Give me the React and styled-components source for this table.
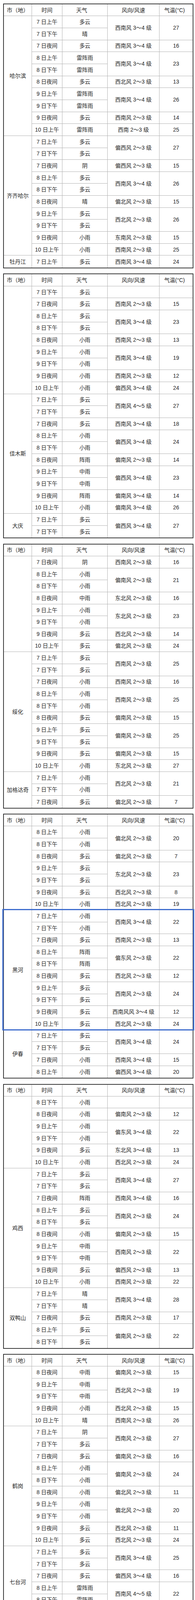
import React from 'react';
import styled, { createGlobalStyle } from 'styled-components';

const HEADER_H = 30.3;
const ROW_H = 30.67;

const GlobalStyle = createGlobalStyle`
  html, body { margin: 0; padding: 0; background: #fff; }
  body {
    font-family: "Liberation Sans", "Noto Sans CJK SC", sans-serif;
    color: #262626;
  }
`;

const Page = styled.div`
  width: 500px;
  box-sizing: border-box;
  padding: 9px 4px 4px 8px;
  display: flex;
  flex-direction: column;
  gap: 13.3px;
`;

const Frame = styled.div`
  position: relative;
  width: 488px;
  box-sizing: border-box;
  border: 2px solid #3a3a3a;
  background: #fff;
`;

const Sheet = styled.div`
  display: grid;
  grid-template-columns: 72px 78px 116px 133px 1fr;
  grid-template-rows: ${HEADER_H}px repeat(${(p) => p.$rows}, ${ROW_H}px);
  font-size: 14px;
  line-height: 1;
`;

const Cell = styled.div`
  grid-column: ${(p) => p.$col};
  grid-row: ${(p) => p.$row} / span ${(p) => p.$span || 1};
  box-sizing: border-box;
  display: flex;
  align-items: center;
  justify-content: center;
  white-space: nowrap;
  color: #262626;
  border-right: ${(p) => (p.$col === 5 ? 'none' : '1px solid #b2b2b2')};
  border-bottom: ${(p) => (p.$end ? 'none' : '1px solid #b2b2b2')};
`;

const HeadCell = styled(Cell)`
  padding-right: ${(p) => p.$shift || 0}px;
`;

const Highlight = styled.div`
  position: absolute;
  left: -4px;
  width: 492px;
  box-sizing: border-box;
  border: 3.5px solid #3c6bcd;
  pointer-events: none;
`;

const fix = (s) => (s ? s.replace('~', '～') : s);

const TABLES = [
  { groups: [
      { city: '哈尔滨', rows: [
          ['7 日上午', '多云', '西南风 3~4 级', '27', 2], ['7 日下午', '晴'],
          ['7 日夜间', '多云', '西南风 3~4 级', '16', 1],
          ['8 日上午', '雷阵雨', '西南风 3~4 级', '23', 2], ['8 日下午', '雷阵雨'],
          ['8 日夜间', '多云', '西北风 2~3 级', '13', 1],
          ['9 日上午', '雷阵雨', '西南风 3~4 级', '26', 2], ['9 日下午', '雷阵雨'],
          ['9 日夜间', '多云', '西南风 2~3 级', '14', 1],
          ['10 日上午', '雷阵雨', '西南 2~3 级', '25', 1] ] },
      { city: '齐齐哈尔', rows: [
          ['7 日上午', '多云', '偏西风 2~3 级', '27', 2], ['7 日下午', '多云'],
          ['7 日夜间', '阴', '偏西风 2~3 级', '15', 1],
          ['8 日上午', '多云', '西南风 3~4 级', '26', 2], ['8 日下午', '多云'],
          ['8 日夜间', '晴', '偏北风 2~3 级', '15', 1],
          ['9 日上午', '多云', '西北风 2~3 级', '26', 2], ['9 日下午', '多云'],
          ['9 日夜间', '小雨', '东南风 2~3 级', '15', 1],
          ['10 日上午', '小雨', '西南风 2~3 级', '25', 1] ] },
      { city: '牡丹江', rows: [['7 日上午', '多云', '西南风 3~4 级', '24', 1]] } ] },
  { groups: [
      { city: '', rows: [
          ['7 日下午', '多云', '', '', 1],
          ['7 日夜间', '多云', '西南风 2~3 级', '15', 1],
          ['8 日上午', '多云', '西南风 3~4 级', '23', 2], ['8 日下午', '多云'],
          ['8 日夜间', '小雨', '西南风 2~3 级', '13', 1],
          ['9 日上午', '小雨', '西南风 3~4 级', '19', 2], ['9 日下午', '小雨'],
          ['9 日夜间', '小雨', '西南风 2~3 级', '12', 1],
          ['10 日上午', '小雨', '偏西风 3~4 级', '24', 1] ] },
      { city: '佳木斯', rows: [
          ['7 日上午', '多云', '西南风 4~5 级', '27', 2], ['7 日下午', '多云'],
          ['7 日夜间', '多云', '西南风 3~4 级', '18', 1],
          ['8 日上午', '小雨', '偏西风 3~4 级', '24', 2], ['8 日下午', '小雨'],
          ['8 日夜间', '阵雨', '偏南风 2~3 级', '14', 1],
          ['9 日上午', '中雨', '偏西风 3~4 级', '23', 2], ['9 日下午', '中雨'],
          ['9 日夜间', '阵雨', '偏南风 3~4 级', '14', 1],
          ['10 日上午', '小雨', '偏南风 3~4 级', '26', 1] ] },
      { city: '大庆', rows: [
          ['7 日上午', '多云', '偏西风 3~4 级', '27', 2], ['7 日下午', '多云'] ] } ] },
  { groups: [
      { city: '', rows: [
          ['7 日夜间', '阴', '西南风 2~3 级', '16', 1],
          ['8 日上午', '小雨', '偏南风 2~3 级', '21', 2], ['8 日下午', '小雨'],
          ['8 日夜间', '中雨', '东北风 2~3 级', '16', 1],
          ['9 日上午', '小雨', '东北风 2~3 级', '23', 2], ['9 日下午', '小雨'],
          ['9 日夜间', '多云', '西北风 2~3 级', '14', 1],
          ['10 日上午', '多云', '偏北风 2~3 级', '24', 1] ] },
      { city: '绥化', rows: [
          ['7 日上午', '多云', '西南风 2~3 级', '25', 2], ['7 日下午', '多云'],
          ['7 日夜间', '小雨', '西南风 2~3 级', '16', 1],
          ['8 日上午', '小雨', '西南风 2~3 级', '25', 2], ['8 日下午', '小雨'],
          ['8 日夜间', '多云', '偏南风 2~3 级', '15', 1],
          ['9 日上午', '多云', '偏南风 2~3 级', '25', 2], ['9 日下午', '多云'],
          ['9 日夜间', '多云', '偏南风 2~3 级', '15', 1],
          ['10 日上午', '小雨', '东北风 2~3 级', '27', 1] ] },
      { city: '加格达奇', rows: [
          ['7 日上午', '小雨', '西北风 2~3 级', '21', 2], ['7 日下午', '小雨'],
          ['7 日夜间', '多云', '偏北风 2~3 级', '7', 1] ] } ] },
  { highlight: 1, groups: [
      { city: '', rows: [
          ['8 日上午', '小雨', '偏北风 2~3 级', '20', 2], ['8 日下午', '小雨'],
          ['8 日夜间', '多云', '偏北风 2~3 级', '7', 1],
          ['9 日上午', '多云', '东北风 2~3 级', '23', 2], ['9 日下午', '多云'],
          ['9 日夜间', '多云', '西北风 2~3 级', '8', 1],
          ['10 日上午', '小雨', '西北风 2~3 级', '19', 1] ] },
      { city: '黑河', rows: [
          ['7 日上午', '小雨', '西南风 3~4 级', '22', 2], ['7 日下午', '小雨'],
          ['7 日夜间', '多云', '西南风 2~3 级', '13', 1],
          ['8 日上午', '阵雨', '偏东风 2~3 级', '22', 2], ['8 日下午', '阵雨'],
          ['8 日夜间', '多云', '西北风 2~3 级', '12', 1],
          ['9 日上午', '多云', '西南风 2~3 级', '24', 2], ['9 日下午', '多云'],
          ['9 日夜间', '多云', '西南风风 3~4 级', '12', 1],
          ['10 日上午', '多云', '西北风 2~3 级', '24', 1] ] },
      { city: '伊春', rows: [
          ['7 日上午', '多云', '西南风 3~4 级', '24', 2], ['7 日下午', '多云'],
          ['7 日夜间', '小雨', '西南风 3~4 级', '15', 1],
          ['8 日上午', '小雨', '偏西风 3~4 级', '20', 1] ] } ] },
  { groups: [
      { city: '', rows: [
          ['8 日下午', '小雨', '', '', 1],
          ['8 日夜间', '小雨', '偏南风 2~3 级', '12', 1],
          ['9 日上午', '小雨', '偏东风 3~4 级', '22', 2], ['9 日下午', '小雨'],
          ['9 日夜间', '多云', '东北风 3~4 级', '13', 1],
          ['10 日上午', '小雨', '西北风 2~3 级', '24', 1] ] },
      { city: '鸡西', rows: [
          ['7 日上午', '多云', '西南风 3~4 级', '27', 2], ['7 日下午', '多云'],
          ['7 日夜间', '阵雨', '西南风 3~4 级', '16', 1],
          ['8 日上午', '多云', '西南风 2~3 级', '24', 2], ['8 日下午', '多云'],
          ['8 日夜间', '小雨', '偏南风 2~3 级', '15', 1],
          ['9 日上午', '中雨', '西南风 2~3 级', '22', 2], ['9 日下午', '中雨'],
          ['9 日夜间', '多云', '偏西风 2~3 级', '13', 1],
          ['10 日上午', '小雨', '西南风 2~3 级', '22', 1] ] },
      { city: '双鸭山', rows: [
          ['7 日上午', '晴', '西南风 3~4 级', '28', 2], ['7 日下午', '晴'],
          ['7 日夜间', '多云', '西南风 2~3 级', '17', 1],
          ['8 日上午', '多云', '偏南风 2~3 级', '22', 2], ['8 日下午', '多云'] ] } ] },
  { groups: [
      { city: '', rows: [
          ['8 日夜间', '中雨', '偏南风 2~3 级', '15', 1],
          ['9 日上午', '中雨', '西北风 2~3 级', '19', 2], ['9 日下午', '中雨'],
          ['9 日夜间', '小雨', '西北风 2~3 级', '15', 1],
          ['10 日上午', '晴', '西南风 2~3 级', '26', 1] ] },
      { city: '鹤岗', rows: [
          ['7 日上午', '阴', '西南风 2~3 级', '27', 2], ['7 日下午', '多云'],
          ['7 日夜间', '多云', '偏南风 2~3 级', '16', 1],
          ['8 日上午', '小雨', '偏南风 2~3 级', '24', 2], ['8 日下午', '小雨'],
          ['8 日夜间', '小雨', '偏北风 2~3 级', '11', 1],
          ['9 日上午', '小雨', '偏北风 2~3 级', '20', 2], ['9 日下午', '小雨'],
          ['9 日夜间', '多云', '西北风 2~3 级', '11', 1],
          ['10 日上午', '多云', '西北风 2~3 级', '24', 1] ] },
      { city: '七台河', rows: [
          ['7 日上午', '多云', '西南风 3~4 级', '25', 2], ['7 日下午', '多云'],
          ['7 日夜间', '多云', '偏西风 3~4 级', '16', 1],
          ['8 日上午', '雷阵雨', '西南风 4~5 级', '22', 2], ['8 日下午', '雷阵雨'],
          ['8 日夜间', '阵雨', '东南风 2~3 级', '12', 1] ] } ] },
  { groups: [
      { city: '', rows: [
          ['9 日上午', '阵雨', '偏西风 3~4 级', '22', 2], ['9 日下午', '阵雨'],
          ['9 日夜间', '多云', '西南风 3~4 级', '10', 1],
          ['10 日上午', '雷阵雨', '偏南风 4~5 级', '22', 1] ] } ] },
];

const HEADS = [
  ['市（地）', 0],
  ['时间', 0],
  ['天气', 16],
  ['风向/风速', 0],
  ['气温(°C)', 8],
];

function ForecastTable({ table }) {
  const total = table.groups.reduce((n, g) => n + g.rows.length, 0);
  const lastRow = total + 1;
  const cells = [];
  let hl = null;
  let idx = 0;

  table.groups.forEach((g, gi) => {
    if (table.highlight === gi) hl = { start: idx, count: g.rows.length };
    const gStart = idx + 2;
    cells.push(
      <Cell key={`c${gi}`} $col={1} $row={gStart} $span={g.rows.length}
        $end={gStart + g.rows.length - 1 === lastRow}>
        {g.city}
      </Cell>
    );
    g.rows.forEach((r, ri) => {
      const row = idx + 2;
      const isEnd = row === lastRow;
      cells.push(
        <Cell key={`t${gi}-${ri}`} $col={2} $row={row} $end={isEnd}>{r[0]}</Cell>,
        <Cell key={`w${gi}-${ri}`} $col={3} $row={row} $end={isEnd}>{r[1]}</Cell>
      );
      if (r.length > 2) {
        const spanEnd = row + r[4] - 1 === lastRow;
        cells.push(
          <Cell key={`d${gi}-${ri}`} $col={4} $row={row} $span={r[4]} $end={spanEnd}>{fix(r[2])}</Cell>,
          <Cell key={`p${gi}-${ri}`} $col={5} $row={row} $span={r[4]} $end={spanEnd}>{r[3]}</Cell>
        );
      }
      idx += 1;
    });
  });

  return (
    <Frame>
      <Sheet $rows={total}>
        {HEADS.map(([label, shift], i) => (
          <HeadCell key={label} $col={i + 1} $row={1} $shift={shift}>{label}</HeadCell>
        ))}
        {cells}
      </Sheet>
      {hl && (
        <Highlight style={{ top: HEADER_H + hl.start * ROW_H - 3, height: hl.count * ROW_H + 4 }} />
      )}
    </Frame>
  );
}

export default function App() {
  return (
    <>
      <GlobalStyle />
      <Page>
        {TABLES.map((t, i) => (
          <ForecastTable key={i} table={t} />
        ))}
      </Page>
    </>
  );
}
